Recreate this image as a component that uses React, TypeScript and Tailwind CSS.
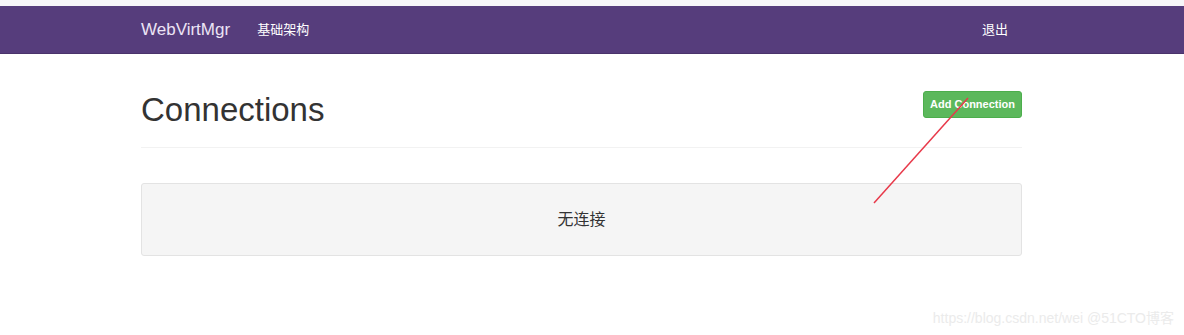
export default function App() {
  return (
    <div className="relative w-[1184px] h-[335px] bg-white overflow-hidden" style={{ fontFamily: '"Liberation Sans", Arial, "Noto Sans CJK SC", sans-serif' }}>
      <div className="h-[6px] bg-[#f7f6f9]" />
      <nav className="h-[48px] bg-[#563d7c] border-b border-[#4a336b]">
        <div className="w-[881px] ml-[141px] flex items-center h-full">
          <span className="text-[17px] text-[#ece4f5]">WebVirtMgr</span>
          <span className="ml-[27px] text-[13px] text-white">基础架构</span>
          <span className="ml-auto mr-[14px] text-[13px] text-white">退出</span>
        </div>
      </nav>
      <div className="w-[881px] ml-[141px]">
        <div className="flex items-start justify-between pt-[37px] pb-[18px] border-b border-[#f2f2f2]">
          <h1 className="text-[33px] leading-[38px] text-[#333]">Connections</h1>
          <button className="h-[27px] w-[99px] rounded-[3px] bg-[#5cb85c] border border-[#4cae4c] text-white text-[11px] font-bold">
            Add Connection
          </button>
        </div>
        <div className="mt-[35px] h-[73px] bg-[#f5f5f5] border border-[#e3e3e3] rounded-[3px] flex items-center justify-center">
          <span className="text-[16px] text-[#333]">无连接</span>
        </div>
      </div>
      <svg className="absolute left-0 top-0 pointer-events-none" width="1184" height="335">
        <line x1="874" y1="203" x2="968" y2="98" stroke="#e8394a" strokeWidth="1.5" />
      </svg>
      <span className="absolute right-[10px] bottom-[6px] text-[14px] text-[#ebebeb]">https://blog.csdn.net/wei @51CTO博客</span>
    </div>
  );
}
